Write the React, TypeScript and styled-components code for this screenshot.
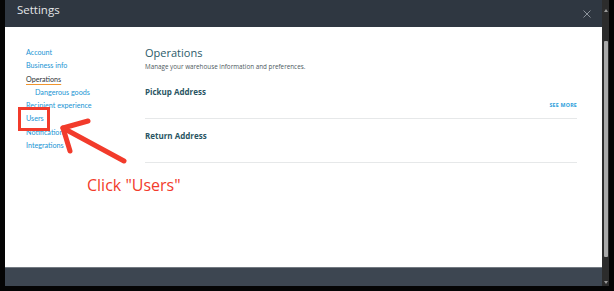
import styled, { createGlobalStyle } from 'styled-components';

const Global = createGlobalStyle`
  html, body {
    margin: 0;
    padding: 0;
    background: #050505;
  }
  body {
    font-family: "Open Sans", "Liberation Sans", sans-serif;
  }
`;

const Frame = styled.div`
  position: relative;
  width: 614px;
  height: 291px;
  box-sizing: border-box;
  padding: 0 5px 5px 5px;
  display: flex;
  background: #050505;
`;

const Window = styled.div`
  flex: 1;
  display: flex;
  flex-direction: column;
`;

const Header = styled.div`
  height: 27px;
  flex: none;
  background: #2f3741;
  display: flex;
  justify-content: space-between;
  align-items: flex-start;
  padding: 3px 11px 0 12px;
  box-sizing: border-box;
`;

const Title = styled.div`
  color: #e4e6e8;
  font-size: 11.5px;
  line-height: 14px;
`;

const Close = styled.svg`
  margin-top: 7px;
  width: 8px;
  height: 8px;
`;

const Body = styled.div`
  flex: 1;
  background: #fff;
  display: grid;
  grid-template-columns: 140px 1fr;
  padding-top: 19px;
  box-sizing: border-box;
`;

const Nav = styled.nav`
  display: flex;
  flex-direction: column;
  align-items: flex-start;
  padding-left: 21px;
`;

const NavItem = styled.a<{ $active?: boolean; $sub?: boolean }>`
  font-family: Lato, "Open Sans", sans-serif;
  font-size: 7.2px;
  line-height: 13.25px;
  color: ${(p) => (p.$active ? '#2e3338' : '#2295d4')};
  padding-left: ${(p) => (p.$sub ? '9px' : '0')};
  text-decoration: ${(p) => (p.$active ? 'underline' : 'none')};
  text-decoration-color: #f0952e;
  text-decoration-thickness: 1px;
  text-underline-offset: 2px;
  white-space: nowrap;
`;

const Main = styled.main`
  padding-right: 25px;
  display: flex;
  flex-direction: column;
`;

const PageTitle = styled.h1`
  margin: 0;
  font-size: 11px;
  line-height: 14px;
  font-weight: 400;
  color: #2c5b69;
`;

const Description = styled.p`
  margin: 2px 0 4px;
  font-size: 6.3px;
  line-height: 9px;
  color: #4e5a60;
`;

const Section = styled.section`
  padding: 12px 0 9px;
  border-bottom: 1px solid #e6e8e9;
`;

const SectionTitle = styled.h2`
  margin: 0;
  font-size: 8px;
  line-height: 10px;
  font-weight: 700;
  color: #2a5563;
`;

const Actions = styled.div`
  margin-top: 4px;
  height: 8px;
  display: flex;
  justify-content: flex-end;
  align-items: center;
`;

const SeeMore = styled.a`
  font-size: 5.3px;
  font-weight: 700;
  letter-spacing: 0.2px;
  color: #2aa0dc;
`;

const Footer = styled.div`
  height: 19px;
  flex: none;
  background: #3d4651;
  border-top: 1px solid #737a82;
  box-sizing: border-box;
`;

const Scrollbar = styled.div`
  width: 7px;
  flex: none;
  background: #2c2c2c;
  display: flex;
  flex-direction: column;
  align-items: center;
`;

const Arrow = styled.div<{ $down?: boolean }>`
  width: 0;
  height: 0;
  border-left: 2px solid transparent;
  border-right: 2px solid transparent;
  ${(p) => (p.$down ? 'border-top: 3px solid #9a9a9a;' : 'border-bottom: 3px solid #9a9a9a;')}
  margin: ${(p) => (p.$down ? '0 0 2px' : '9px 0 0')};
`;

const Thumb = styled.div`
  width: 4px;
  margin: 29px 0 0;
  height: 216px;
  background: #a9a9a9;
  border-radius: 1px;
`;

const Spacer = styled.div`
  flex: 1;
`;

const Highlight = styled.div`
  position: absolute;
  left: 18px;
  top: 107px;
  width: 32px;
  height: 24px;
  box-sizing: border-box;
  border: 3px solid #f23b2b;
`;

const Pointer = styled.svg`
  position: absolute;
  left: 0;
  top: 0;
  width: 614px;
  height: 291px;
  pointer-events: none;
`;

const Callout = styled.div`
  position: absolute;
  left: 87px;
  top: 174px;
  font-size: 16px;
  line-height: 22px;
  color: #f23b2b;
  white-space: nowrap;
`;

const navItems = [
  { label: 'Account' },
  { label: 'Business info' },
  { label: 'Operations', active: true },
  { label: 'Dangerous goods', sub: true },
  { label: 'Recipient experience' },
  { label: 'Users' },
  { label: 'Notifications' },
  { label: 'Integrations' },
];

export default function App() {
  return (
    <>
      <Global />
      <Frame>
        <Window>
          <Header>
            <Title>Settings</Title>
            <Close viewBox="0 0 8 8">
              <path d="M0.5 0.5L7.5 7.5M7.5 0.5L0.5 7.5" stroke="#8c939b" strokeWidth="1" />
            </Close>
          </Header>
          <Body>
            <Nav>
              {navItems.map((n) => (
                <NavItem key={n.label} $active={n.active} $sub={n.sub}>
                  {n.label}
                </NavItem>
              ))}
            </Nav>
            <Main>
              <PageTitle>Operations</PageTitle>
              <Description>Manage your warehouse information and preferences.</Description>
              <Section>
                <SectionTitle>Pickup Address</SectionTitle>
                <Actions>
                  <SeeMore>SEE MORE</SeeMore>
                </Actions>
              </Section>
              <Section>
                <SectionTitle>Return Address</SectionTitle>
                <Actions />
              </Section>
            </Main>
          </Body>
          <Footer />
        </Window>
        <Scrollbar>
          <Arrow />
          <Thumb />
          <Spacer />
          <Arrow $down />
        </Scrollbar>

        <Highlight />
        <Pointer viewBox="0 0 614 291">
          <g stroke="#f23b2b" strokeWidth="5" strokeLinecap="round" strokeLinejoin="round" fill="none">
            <path d="M124 161L63 128" />
            <path d="M88 121L63 128L70 151" />
          </g>
        </Pointer>
        <Callout>Click "Users"</Callout>
      </Frame>
    </>
  );
}
